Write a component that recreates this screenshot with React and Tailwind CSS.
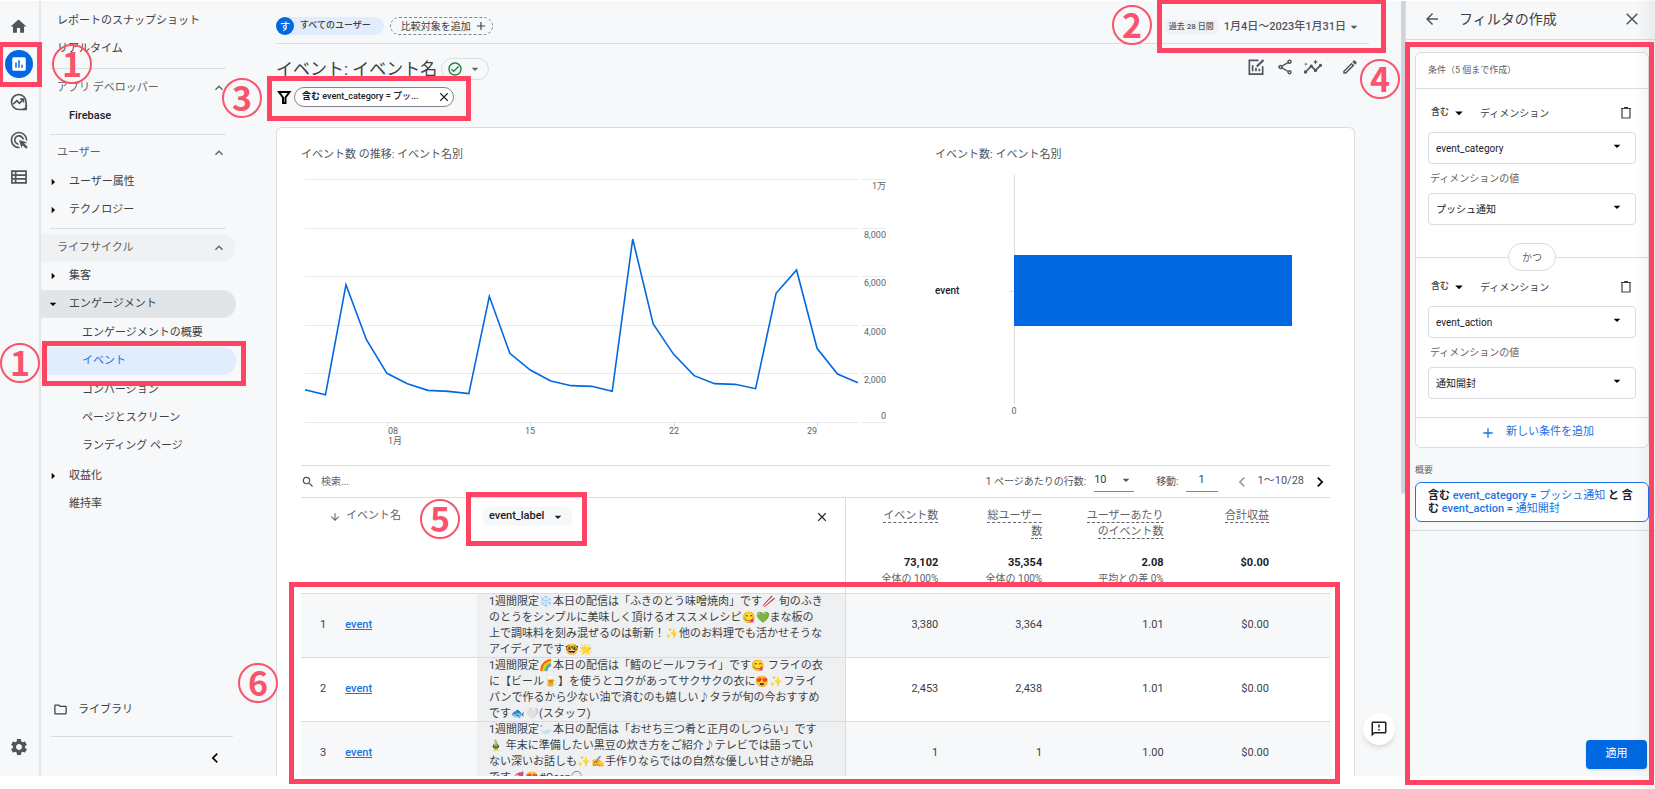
import React from "react";
import {
  MdAdd,
  MdAdsClick,
  MdArrowBack,
  MdArrowDownward,
  MdArrowDropDown,
  MdArrowRight,
  MdChevronLeft,
  MdChevronRight,
  MdExpandLess,
  MdHome,
  MdInsertChart,
  MdInsights,
  MdOutlineCheckCircle,
  MdOutlineEdit,
  MdOutlineFeedback,
  MdOutlineFolder,
  MdOutlineShare,
  MdSearch,
  MdSettings,
} from "react-icons/md";

const trend = [
  1331, 1125, 5652, 3388, 2003, 1578, 1303, 1262, 1166, 5171, 2826, 2140, 1687, 1495, 1468, 1262,
  7531, 4033, 2785, 1907, 1578, 1550, 1372, 5295, 6255, 3032, 1975, 1619,
];

const columns = [
  { label: ["イベント数"], total: "73,102", note: "全体の 100%" },
  { label: ["総ユーザー", "数"], total: "35,354", note: "全体の 100%" },
  { label: ["ユーザーあたり", "のイベント数"], total: "2.08", note: "平均との差 0%" },
  { label: ["合計収益"], total: "$0.00", note: "" },
];

const rows = [
  {
    lines: [
      "1週間限定❄️本日の配信は「ふきのとう味噌焼肉」です🥢 旬のふき",
      "のとうをシンプルに美味しく頂けるオススメレシピ😋💚まな板の",
      "上で調味料を刻み混ぜるのは斬新！✨他のお料理でも活かせそうな",
      "アイディアです🤓🌟",
    ],
    values: ["3,380", "3,364", "1.01", "$0.00"],
  },
  {
    lines: [
      "1週間限定🌈本日の配信は「鱈のビールフライ」です😋 フライの衣",
      "に【ビール🍺】を使うとコクがあってサクサクの衣に😍✨フライ",
      "パンで作るから少ない油で済むのも嬉しい♪タラが旬の今おすすめ",
      "です🐟🤍(スタッフ)",
    ],
    values: ["2,453", "2,438", "1.01", "$0.00"],
  },
  {
    lines: [
      "1週間限定🦢本日の配信は「おせち三つ肴と正月のしつらい」です",
      "🎍 年末に準備したい黒豆の炊き方をご紹介♪テレビでは語ってい",
      "ない深いお話しも✨✍️手作りならではの自然な優しい甘さが絶品",
      "です🍠😍#Ocen○",
    ],
    values: ["1", "1", "1.00", "$0.00"],
  },
];

const ExploreIcon = () => (
  <svg viewBox="0 0 24 24" className="w-5 h-5" fill="none" stroke="currentColor" strokeWidth="2">
    <path d="M12 3a9 9 0 1 0 0 18h8.5v-8.500A9 9 0 0 0 12 3z" />
    <path d="M16 21c3 0 5-2.500 5-5" />
    <path d="M5 14.500l4.500-4 3 3L17 9" />
    <path d="M13.500 8.500h4v4" />
  </svg>
);

const TableIcon = () => (
  <svg viewBox="0 0 24 24" className="w-5 h-5" fill="none" stroke="currentColor" strokeWidth="2">
    <path d="M3.500 5h17v14h-17zM8 5v14M3.500 9.700h17M3.500 14.300h17" />
  </svg>
);

const ChartEditIcon = () => (
  <svg viewBox="0 0 24 24" className="w-5 h-5" fill="none" stroke="currentColor" strokeWidth="2">
    <path d="M15 4H4v16.500h16V11" />
    <path d="M8 10v7M12 13v4M16 14v3" />
    <path d="M13 11.500l8-8" strokeWidth="2.600" />
  </svg>
);

const TrashIcon = () => (
  <svg viewBox="0 0 12 12" className="w-3 h-3" fill="none" stroke="currentColor">
    <path d="M2 2v9h8V2M1 1.500h10M4 .7h4" strokeWidth="1.200" />
  </svg>
);

const FunnelIcon = () => (
  <svg viewBox="0 0 16 16" className="w-4 h-4" fill="none" stroke="currentColor" strokeWidth="2">
    <path d="M3 3h10.500L9.500 8.500V14h-2.500V8.500z" />
  </svg>
);

const CloseIcon = ({ className }) => (
  <svg viewBox="0 0 12 12" className={className} fill="none" stroke="currentColor" strokeWidth="1.300">
    <path d="M1.500 1.500l9 9M10.500 1.500l-9 9" />
  </svg>
);

const NavDivider = ({ className }) => <hr className={`ml-[9px] w-44 border-[#dadce0] ${className}`} />;

const NavSection = ({ children, active }) => (
  <button
    className={`flex h-7 w-[195px] items-center justify-between rounded-r-full pl-4 pr-[9px] text-[#5f6368] ${
      active ? "bg-[#eff1f2]" : ""
    }`}
  >
    {children}
    <MdExpandLess className="w-4 h-4" />
  </button>
);

const NavItem = ({ children, level = 1, arrow, open, tone = "text-[#3c4043]" }) => {
  const pad = { 0: "pl-4", 1: "pl-7", 2: "pl-[41px]" }[level];
  return (
    <a href="#" className={`relative flex h-7 w-[195px] items-center rounded-r-full ${pad} ${tone}`}>
      {arrow && (
        <MdArrowRight className={`absolute left-1 w-4 h-4 text-black ${open ? "rotate-90" : ""}`} />
      )}
      {children}
    </a>
  );
};

const Sidebar = () => (
  <>
    <div className="flex w-[41px] shrink-0 flex-col items-center border-r-2 border-[#e3e5e8] pr-0.5 text-[#50555b]">
      <button aria-label="ホーム" className="mt-4">
        <MdHome className="w-[19px] h-[19px]" />
      </button>
      <button
        aria-label="レポート"
        className="mt-3.5 flex w-7 h-7 items-center justify-center rounded-full bg-[#0068e1] text-white"
      >
        <MdInsertChart className="w-[18px] h-[18px]" />
      </button>
      <button aria-label="探索" className="mt-3.5">
        <ExploreIcon />
      </button>
      <button aria-label="広告" className="mt-[18px]">
        <MdAdsClick className="w-5 h-5" />
      </button>
      <button aria-label="設定一覧" className="mt-[17px]">
        <TableIcon />
      </button>
      <button aria-label="管理" className="mb-[19px] mt-auto">
        <MdSettings className="w-5 h-5" />
      </button>
    </div>

    <nav className="flex w-[235px] shrink-0 flex-col pt-1.5 text-[11px]">
      <NavItem level={0}>レポートのスナップショット</NavItem>
      <NavItem level={0}>リアルタイム</NavItem>
      <NavDivider className="my-[5px]" />
      <NavSection>アプリ デベロッパー</NavSection>
      <NavItem tone="font-medium text-[#202124]">Firebase</NavItem>
      <NavDivider className="my-1" />
      <NavSection>ユーザー</NavSection>
      <div className="mt-px">
        <NavItem arrow>ユーザー属性</NavItem>
        <NavItem arrow>テクノロジー</NavItem>
      </div>
      <NavDivider className="mb-[5px] mt-1" />
      <NavSection active>ライフサイクル</NavSection>
      <NavItem arrow>集客</NavItem>
      <NavItem arrow open tone="bg-[#e2e5e8] text-[#3c4043]">
        エンゲージメント
      </NavItem>
      <div className="mt-px">
        <NavItem level={2}>エンゲージメントの概要</NavItem>
        <NavItem level={2} tone="bg-[#e1edfd] text-[#1a73e8]">
          イベント
        </NavItem>
      </div>
      <div className="mt-px">
        <NavItem level={2}>コンバージョン</NavItem>
        <NavItem level={2}>ページとスクリーン</NavItem>
        <NavItem level={2}>ランディング ページ</NavItem>
      </div>
      <div className="mt-0.5">
        <NavItem arrow>収益化</NavItem>
        <NavItem>維持率</NavItem>
      </div>
      <a href="#" className="mt-auto flex items-center gap-2.5 pl-3 text-[#3c4043]">
        <MdOutlineFolder className="w-[15px] h-[15px]" />
        ライブラリ
      </a>
      <hr className="ml-2.5 mt-[18px] w-[182px] border-[#dadce0]" />
      <button aria-label="折りたたむ" className="mb-2 ml-[164px] mt-[11px] w-5">
        <MdChevronLeft className="w-5 h-5 text-black" />
      </button>
    </nav>
  </>
);

const Header = () => (
  <>
    <div className="mr-8 flex h-[43px] items-center justify-between border-b border-[#dadce0] pt-2">
      <div className="flex gap-1.5">
        <button className="flex h-[18px] items-center gap-1.5 rounded-full bg-[#e1edfd] pr-[13px] text-[9px] font-medium text-[#3c4043]">
          <span className="flex w-[18px] h-[18px] items-center justify-center rounded-full bg-[#0068e1] text-[10px] text-white">
            す
          </span>
          すべてのユーザー
        </button>
        <button className="flex h-[18px] items-center gap-[3px] rounded-full border border-dashed border-[#80868b] pl-2.5 pr-1 text-[10px] text-[#3c4043]">
          比較対象を追加
          <MdAdd className="w-3.5 h-3.5" />
        </button>
      </div>
      <button className="mr-[7px] flex items-center pt-0.5 text-[11px] font-medium text-[#50555b]">
        <span className="mr-1.5 rounded-sm bg-[#eff1f2] px-1 text-[8px] leading-[14px]">過去 28 日間</span>
        1月4日〜2023年1月31日
        <MdArrowDropDown className="w-4 h-4" />
      </button>
    </div>

    <div className="mr-[42px] flex h-[37px] items-end justify-between">
      <div className="flex items-center gap-1">
        <h1 className="text-[17px] leading-6 text-[#3c4043]">イベント: イベント名</h1>
        <button
          aria-label="ステータス"
          className="flex h-[22px] items-center gap-1 rounded-full border border-[#dadce0] px-[5px] text-[#5f6368]"
        >
          <MdOutlineCheckCircle className="w-4 h-4 text-[#188038]" />
          <MdArrowDropDown className="w-4 h-4" />
        </button>
      </div>
      <div className="mb-1 flex items-center text-[#50555b]">
        <button aria-label="比較を編集" className="mr-2.5">
          <ChartEditIcon />
        </button>
        <button aria-label="共有" className="mr-[9px]">
          <MdOutlineShare className="w-[18px] h-[18px]" />
        </button>
        <button aria-label="インサイト" className="mr-[18px]">
          <MdInsights className="w-5 h-5" />
        </button>
        <button aria-label="編集">
          <MdOutlineEdit className="w-[18px] h-[18px]" />
        </button>
      </div>
    </div>

    <div className="mt-1.5 flex h-5 items-center gap-0.5">
      <FunnelIcon />
      <div className="flex h-5 w-[160px] items-center justify-between rounded-full border border-[#80868b] bg-white pl-[7px] pr-1 text-[9px] text-[#202124]">
        <span>
          <b>含む</b> <span className="font-medium">event_category = プッ...</span>
        </span>
        <button aria-label="フィルタを削除">
          <CloseIcon className="w-2.5 h-2.5" />
        </button>
      </div>
    </div>
  </>
);

const LineChart = () => {
  const x = (i) => 4 + (i * 553) / 27;
  const y = (v) => 252 - (v * 243) / 10000;
  const ticks = [
    [10000, "1万"],
    [8000, "8,000"],
    [6000, "6,000"],
    [4000, "4,000"],
    [2000, "2,000"],
    [0, "0"],
  ];
  return (
    <svg viewBox="0 0 634 290" className="w-full">
      {ticks.map(([v, label]) => (
        <g key={v}>
          <path d={`M4 ${Math.round(y(v)) + 0.5}H557M560 ${Math.round(y(v)) + 0.5}H585`} stroke="#e8eaed" />
          <text x="585" y={v ? y(v) + 10 : 249} textAnchor="end" fontSize="9" fill="#5f6368">
            {label}
          </text>
        </g>
      ))}
      {[4, 11, 18, 25].map((i) => (
        <path key={i} d={`M${Math.round(x(i)) + 0.5} 252v4`} stroke="#dadce0" />
      ))}
      <g fontSize="9" fill="#5f6368">
        <text x="87" y="264">08</text>
        <text x="87" y="274">1月</text>
        <text x="229" y="264" textAnchor="middle">15</text>
        <text x="373" y="264" textAnchor="middle">22</text>
        <text x="511" y="264" textAnchor="middle">29</text>
      </g>
      <polyline
        points={trend.map((v, i) => `${x(i)},${y(v)}`).join(" ")}
        fill="none"
        stroke="#0068e1"
        strokeWidth="1.600"
      />
    </svg>
  );
};

const BarChart = () => (
  <svg viewBox="0 0 395 260" className="w-full">
    <path d="M79.500 5V234M74 121.500h5" stroke="#dadce0" />
    <rect x="79" y="85" width="278" height="71" fill="#0068e1" />
    <text x="0" y="124" fontSize="10" fontWeight="500" fill="#202124">event</text>
    <text x="79" y="244" fontSize="9" textAnchor="middle" fill="#5f6368">0</text>
  </svg>
);

const Pager = () => (
  <div className="flex h-8 items-center justify-between border-t border-[#dadce0] text-[10px] text-[#50555b]">
    <label className="flex items-center gap-1.5">
      <MdSearch className="w-3.5 h-3.5 text-[#50555b]" />
      <input type="search" placeholder="検索..." className="w-40 placeholder:text-[#5f6368]" />
    </label>
    <div className="flex items-center">
      <label htmlFor="page-size">1 ページあたりの行数:</label>
      <div className="relative ml-2 mr-[22px]">
        <select
          id="page-size"
          defaultValue="10"
          className="h-5 w-10 appearance-none border-b border-[#80868b] pb-1 text-[11px] text-[#3c4043]"
        >
          <option>10</option>
          <option>25</option>
        </select>
        <MdArrowDropDown className="pointer-events-none absolute right-0 top-0 w-4 h-4" />
      </div>
      <label htmlFor="page-no">移動:</label>
      <input
        id="page-no"
        defaultValue="1"
        className="ml-[7px] mr-3.5 h-5 w-8 border-b border-[#80868b] pb-1 text-center text-[11px] text-[#3c4043]"
      />
      <button aria-label="前へ">
        <MdChevronLeft className="w-5 h-5 text-[#9aa0a6]" />
      </button>
      <span className="mx-1.5 text-[11px]">1〜10/28</span>
      <button aria-label="次へ">
        <MdChevronRight className="w-5 h-5 text-black" />
      </button>
    </div>
  </div>
);

const EventTable = () => (
  <table className="w-full table-fixed border-separate border-spacing-0 text-[11px] text-[#3c4043]">
    <colgroup>
      <col className="w-[4.3%]" />
      <col className="w-[12.8%]" />
      <col className="w-[35.9%]" />
      <col className="w-[10.1%]" />
      <col className="w-[10.1%]" />
      <col className="w-[11.8%]" />
      <col className="w-[15%]" />
    </colgroup>
    <thead>
      <tr className="h-[58px] align-top text-[#5f6368]">
        <th colSpan={2} className="border-t border-[#dadce0] pl-7 pt-2.5 text-left font-normal">
          <span className="flex items-center gap-[5px]">
            <MdArrowDownward className="mt-0.5 w-3 h-3" />
            イベント名
          </span>
        </th>
        <th className="border-r border-t border-[#dadce0] pl-1.5 pr-[18px] pt-[9px] font-normal">
          <div className="flex items-center justify-between text-[#202124]">
            <button className="flex h-[19px] items-center gap-1.5 rounded bg-[#f7f8f9] px-1.5 font-medium">
              event_label
              <MdArrowDropDown className="w-4 h-4" />
            </button>
            <button aria-label="ディメンションを削除">
              <CloseIcon className="w-2.5 h-2.5" />
            </button>
          </div>
        </th>
        {columns.map((c, i) => (
          <th
            key={c.total}
            className={`border-t border-[#dadce0] pt-2.5 text-right font-normal leading-4 ${i === 3 ? "pr-[61px]" : "pr-3"}`}
          >
            {c.label.map((l) => (
              <div key={l}>
                <span className="border-b border-dashed border-[#5f6368]">{l}</span>
              </div>
            ))}
          </th>
        ))}
      </tr>
      <tr className="h-[38px] align-top">
        <td colSpan={2} />
        <td className="border-r border-[#dadce0]" />
        {columns.map((c, i) => (
          <td key={c.total} className={`text-right leading-4 ${i === 3 ? "pr-[61px]" : "pr-3"}`}>
            <div className="font-bold text-[#202124]">{c.total}</div>
            <div className="text-[10px] text-[#5f6368]">{c.note}</div>
          </td>
        ))}
      </tr>
    </thead>
    <tbody>
      {rows.map((row, i) => (
        <tr key={i} className={i % 2 ? "bg-white" : "bg-[#f7f8fa]"}>
          <td className="h-16 border-t border-[#dadce0] text-center">{i + 1}</td>
          <td className="border-t border-[#dadce0]">
            <a href="#" className="font-medium text-[#1a73e8] underline">
              event
            </a>
          </td>
          <td className="border-r border-t border-[#dadce0] bg-[#eff0f2] pl-3">
            <div className="h-[63px] overflow-hidden whitespace-nowrap leading-4">
              {row.lines.map((l) => (
                <div key={l}>{l}</div>
              ))}
            </div>
          </td>
          {row.values.map((v, j) => (
            <td
              key={j}
              className={`border-t border-[#dadce0] text-right ${j === 3 ? "pr-[61px]" : "pr-3"}`}
            >
              {v}
            </td>
          ))}
        </tr>
      ))}
    </tbody>
  </table>
);

const Field = ({ id, label, value }) => (
  <div className="relative">
    <select
      id={id}
      aria-label={label}
      defaultValue={value}
      className="h-8 w-full appearance-none rounded border border-[#dadce0] bg-white px-[7px] text-[10px] text-[#202124]"
    >
      <option>{value}</option>
    </select>
    <MdArrowDropDown className="pointer-events-none absolute right-[11px] top-1.5 w-4 h-4 text-black" />
  </div>
);

const Condition = ({ id, dimension, value }) => (
  <div className="px-3 text-[10px] text-[#3c4043]">
    <div className="flex h-4 items-center pl-[3px] pr-1">
      <button className="flex items-center gap-px text-[9px] font-medium">
        含む
        <MdArrowDropDown className="w-[18px] h-[18px] text-black" />
      </button>
      <span className="ml-3">ディメンション</span>
      <button aria-label="条件を削除" className="ml-auto">
        <TrashIcon />
      </button>
    </div>
    <div className="mt-[11px]">
      <Field id={`${id}-dim`} label="ディメンション" value={dimension} />
    </div>
    <label htmlFor={`${id}-val`} className="block pb-1.5 pl-0.5 pt-[7px] leading-4 text-[#5f6368]">
      ディメンションの値
    </label>
    <Field id={`${id}-val`} value={value} />
  </div>
);

const FilterPanel = () => (
  <aside className="relative flex w-[250px] shrink-0 flex-col border-l border-[#dadce0]">
    <div className="flex h-[39px] items-center border-b border-[#dadce0] pb-0.5 pl-[17px] pr-4 text-[#50555b]">
      <button aria-label="戻る">
        <MdArrowBack className="w-[18px] h-[18px]" />
      </button>
      <h2 className="ml-[18px] text-sm text-[#3c4043]">フィルタの作成</h2>
      <button aria-label="閉じる" className="ml-auto">
        <CloseIcon className="w-3.5 h-3.5" />
      </button>
    </div>
    <div className="border-b border-[#dadce0] pb-2 pl-[9px] pr-1.5 pt-3">
      <div className="rounded-md border border-[#dadce0] bg-white">
        <div className="h-9 border-b border-[#dadce0] px-3 text-[9px] leading-[35px] text-[#5f6368]">
          条件（5 個まで作成）
        </div>
        <div className="pt-4">
          <Condition id="first" dimension="event_category" value="プッシュ通知" />
        </div>
        <div className="flex items-center pt-[18px]">
          <div className="h-px flex-1 bg-[#dadce0]" />
          <span className="flex h-7 w-12 items-center justify-center rounded-full border border-[#dadce0] text-[10px] text-[#5f6368]">
            かつ
          </span>
          <div className="h-px flex-1 bg-[#dadce0]" />
        </div>
        <div className="pb-[18px] pt-2">
          <Condition id="second" dimension="event_action" value="通知開封" />
        </div>
        <button className="flex h-[30px] w-full items-center justify-center gap-2.5 border-t border-[#dadce0] pl-2.5 text-[11px] text-[#1a73e8]">
          <MdAdd className="w-4 h-4" />
          新しい条件を追加
        </button>
      </div>
      <p className="mb-1 mt-3.5 text-[9px] leading-4 text-[#5f6368]">概要</p>
      <p className="rounded-md border border-[#1a73e8] bg-white px-3 py-1.5 text-[11px] leading-[13px] text-[#1a73e8]">
        <b className="text-[#202124]">含む</b> <span className="font-medium">event_category = </span>
        プッシュ通知 <b className="text-[#202124]">と 含む</b>{" "}
        <span className="font-medium">event_action = </span>通知開封
      </p>
    </div>
    <button className="mb-[7px] ml-auto mr-2 mt-auto h-[29px] w-[61px] rounded bg-[#0068e1] text-[11px] text-white shadow">
      適用
    </button>
  </aside>
);

// Red frames and numbers laid over the app, in the order of the steps.
const frames = [
  "left-0 top-[42px] w-[42px] h-[45px] border-l-[3px]",
  "left-[42px] top-[341px] w-[204px] h-[45px]",
  "left-[267px] top-[76px] w-[204px] h-[45px]",
  "right-[269px] top-0 w-[229px] h-[53px] border-t-4",
  "right-px top-[42px] w-[249px] h-[743px]",
  "left-[466px] top-[492px] w-[121px] h-[54px]",
  "left-[289px] right-[315px] top-[582px] h-[202px]",
];

const steps = [
  ["1", "left-[52px] top-11"],
  ["1", "left-0 top-[343px]"],
  ["2", "right-[503px] top-[5px]"],
  ["3", "left-[222px] top-[78px]"],
  ["4", "right-[255px] top-[59px]"],
  ["5", "left-[420px] top-[499px]"],
  ["6", "left-[238px] top-[663px]"],
];

const Annotations = () => (
  <div className="pointer-events-none absolute inset-0">
    <div className="absolute inset-y-0 right-0 w-5 bg-linear-to-r from-transparent to-black/5" />
    {frames.map((pos) => (
      <div key={pos} className={`absolute border-5 border-[#ff4463] ${pos}`} />
    ))}
    {steps.map(([n, pos]) => (
      <div
        key={pos}
        className={`absolute flex w-10 h-10 items-center justify-center rounded-full border-2 border-[#f8546b] pb-0.5 font-['Noto_Sans_CJK_JP',sans-serif] text-[34px] font-bold leading-none text-[#f8546b] ${pos}`}
      >
        {n}
      </div>
    ))}
  </div>
);

const App = () => {
  return (
    <div className="relative h-screen overflow-hidden bg-white pb-[13px] pt-px font-[Roboto,'Noto_Sans_CJK_JP',sans-serif]">
      <div className="flex h-full overflow-hidden bg-[#f7f8fa]">
        <Sidebar />
        <main className="flex min-w-0 flex-1 flex-col">
          <Header />
          <div className="mr-[46px] mt-5 min-h-0 flex-1 overflow-hidden rounded-t-md border border-b-0 border-[#dadce0] bg-white px-6 pt-[19px]">
            <div className="grid grid-cols-[634fr_395fr] text-[11px] leading-4 text-[#50555b]">
              <div>
                <h3>イベント数 の推移: イベント名別</h3>
                <div className="mt-[7px]">
                  <LineChart />
                </div>
              </div>
              <div>
                <h3>イベント数: イベント名別</h3>
                <div className="mt-[7px]">
                  <BarChart />
                </div>
              </div>
            </div>
            <div className="mt-[5px]">
              <Pager />
            </div>
            <EventTable />
          </div>
          <button
            aria-label="フィードバック"
            className="absolute bottom-11 right-[260px] flex w-8 h-8 items-center justify-center rounded-full bg-white text-[#202124] shadow-md"
          >
            <MdOutlineFeedback className="w-[18px] h-[18px]" />
          </button>
        </main>
        <div className="w-1 shrink-0">
          <div className="h-[493px] rounded-b-sm bg-[#d0d4d9]" />
        </div>
        <FilterPanel />
      </div>
      <Annotations />
    </div>
  );
};

export default App;
